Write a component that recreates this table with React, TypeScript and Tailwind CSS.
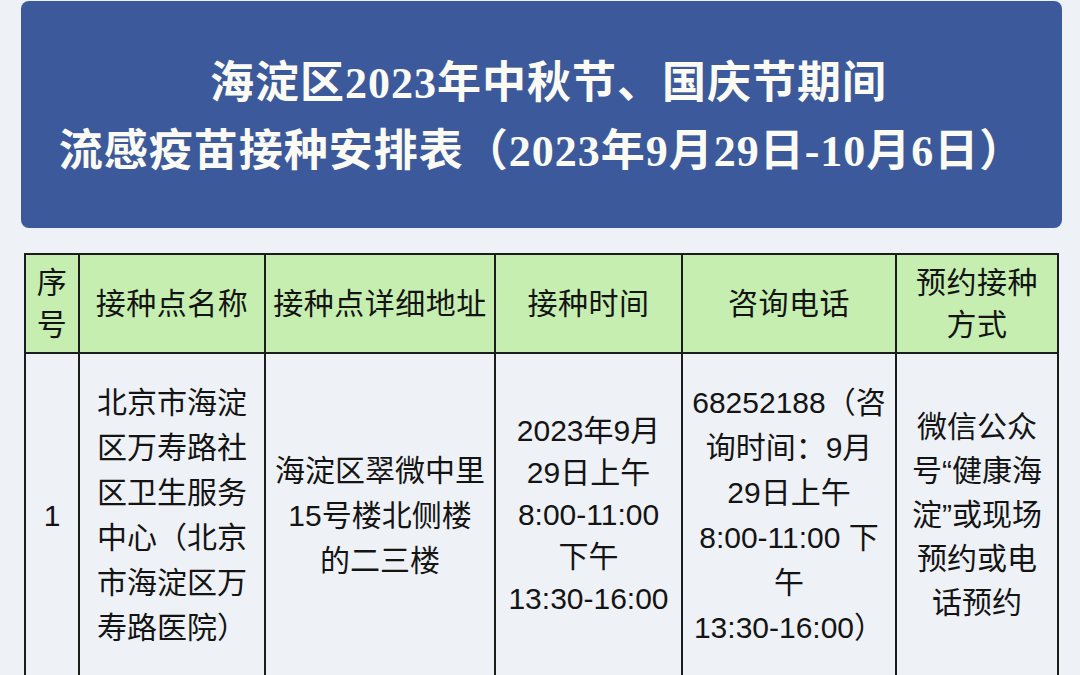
const cell = 'border-2 border-[#1c1c1c] text-center align-middle';

const headers: { label: string[]; width: string }[] = [
  { label: ['序', '号'], width: 'w-[54px]' },
  { label: ['接种点名称'], width: 'w-[186px]' },
  { label: ['接种点详细地址'], width: 'w-[230px]' },
  { label: ['接种时间'], width: 'w-[187px]' },
  { label: ['咨询电话'], width: 'w-[214px]' },
  { label: ['预约接种', '方式'], width: 'w-[162px]' },
];

const row: { lines: string[]; leading: string }[] = [
  { lines: ['1'], leading: 'leading-[45px]' },
  {
    lines: ['北京市海淀', '区万寿路社', '区卫生服务', '中心（北京', '市海淀区万', '寿路医院）'],
    leading: 'leading-[45px]',
  },
  { lines: ['海淀区翠微中里', '15号楼北侧楼', '的二三楼'], leading: 'leading-[45px]' },
  {
    lines: ['2023年9月', '29日上午', '8:00-11:00', '下午', '13:30-16:00'],
    leading: 'leading-[42px]',
  },
  {
    lines: ['68252188（咨', '询时间：9月', '29日上午', '8:00-11:00 下', '午', '13:30-16:00）'],
    leading: 'leading-[45px]',
  },
  {
    lines: ['微信公众', '号“健康海', '淀”或现场', '预约或电', '话预约'],
    leading: 'leading-[44px]',
  },
];

function Lines({ lines }: { lines: string[] }) {
  return (
    <>
      {lines.map((l, i) => (
        <div key={i}>{l}</div>
      ))}
    </>
  );
}

export default function App() {
  return (
    <div className="h-[675px] w-[1080px] overflow-hidden bg-[#eef1f6]">
      <div className="ml-[21px] mt-px flex h-[227px] w-[1041px] flex-col items-center justify-center rounded-lg bg-[#3c5a9b] pt-[6px] font-['Liberation_Serif','Noto_Sans_CJK_SC',serif] text-[44px] font-bold leading-[68px] tracking-[1px] text-[#fbfaf3]">
        <p className="pl-[14px]">海淀区2023年中秋节、国庆节期间</p>
        <p>流感疫苗接种安排表（2023年9月29日-10月6日）</p>
      </div>

      <table className="ml-[24px] mt-[25px] w-[1033px] table-fixed border-collapse font-['Liberation_Sans','Noto_Sans_CJK_SC',sans-serif] text-[30px] text-[#141414]">
        <colgroup>
          {headers.map((h, i) => (
            <col key={i} className={h.width} />
          ))}
        </colgroup>
        <thead>
          <tr className="h-[99px] bg-[#c6eeb1]">
            {headers.map((h, i) => (
              <th key={i} className={`${cell} font-normal leading-[42px] tracking-[0.5px]`}>
                <Lines lines={h.label} />
              </th>
            ))}
          </tr>
        </thead>
        <tbody>
          <tr className="h-[324px]">
            {row.map((c, i) => (
              <td key={i} className={`${cell} ${c.leading}`}>
                <Lines lines={c.lines} />
              </td>
            ))}
          </tr>
        </tbody>
      </table>
    </div>
  );
}
